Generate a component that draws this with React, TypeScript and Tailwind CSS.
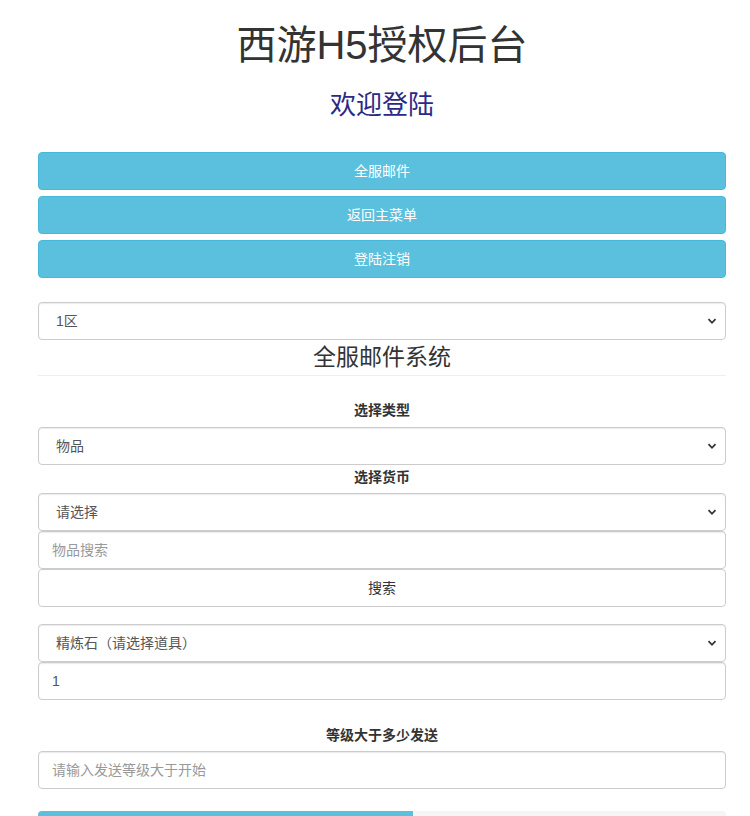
import React from 'react';

const font = { fontFamily: '"Liberation Sans", "Noto Sans CJK SC", sans-serif' };

const Chevron = () => (
  <svg width="10" height="10" viewBox="0 0 10 10" className="text-[#333]">
    <path d="M1.5 3.2 L5 6.8 L8.5 3.2" fill="none" stroke="currentColor" strokeWidth="1.8" />
  </svg>
);

const Select: React.FC<{ value: string }> = ({ value }) => (
  <div className="flex h-[38px] items-center justify-between rounded border border-[#ccc] bg-white pl-[17px] pr-[8px] text-[14px] text-[#555] shadow-[inset_0_1px_1px_rgba(0,0,0,0.08)]">
    <span>{value}</span>
    <Chevron />
  </div>
);

const Input: React.FC<{ value?: string; placeholder?: string }> = ({ value, placeholder }) => (
  <div className="flex h-[38px] items-center rounded border border-[#ccc] bg-white px-[13px] text-[14px] shadow-[inset_0_1px_1px_rgba(0,0,0,0.08)]">
    {value ? <span className="text-[#555]">{value}</span> : <span className="text-[#999]">{placeholder}</span>}
  </div>
);

const Label: React.FC<{ children: React.ReactNode }> = ({ children }) => (
  <div className="text-center text-[14px] font-bold leading-[20px] text-[#333]">{children}</div>
);

const InfoButton: React.FC<{ children: React.ReactNode }> = ({ children }) => (
  <button className="flex h-[38px] w-full items-center justify-center rounded border border-[#46b8da] bg-[#5bc0de] text-[14px] text-white">
    {children}
  </button>
);

export default function App() {
  return (
    <div className="min-h-[816px] overflow-hidden bg-white" style={font}>
      <div className="ml-[38px] w-[688px] pt-[22px]">
        <h1 className="text-center text-[40px] leading-[46px] text-[#333]">西游H5授权后台</h1>
        <h2 className="mt-[21px] text-center text-[26px] leading-[32px] text-[#2a2a86]">欢迎登陆</h2>

        <div className="mt-[31px] flex flex-col gap-[6px]">
          <InfoButton>全服邮件</InfoButton>
          <InfoButton>返回主菜单</InfoButton>
          <InfoButton>登陆注销</InfoButton>
        </div>

        <div className="mt-[24px]">
          <Select value="1区" />
        </div>

        <h3 className="mt-[1px] text-center text-[23px] leading-[32px] text-[#333]">全服邮件系统</h3>
        <hr className="mt-[2px] border-t border-[#eee]" />

        <div className="mt-[24px]">
          <Label>选择类型</Label>
        </div>
        <div className="mt-[7px]">
          <Select value="物品" />
        </div>
        <div className="mt-[2px]">
          <Label>选择货币</Label>
        </div>
        <div className="mt-[6px] flex flex-col gap-0">
          <Select value="请选择" />
          <Input placeholder="物品搜索" />
          <button className="h-[38px] w-full rounded border border-[#ccc] bg-white text-[14px] text-[#333]">搜索</button>
        </div>

        <div className="mt-[17px] flex flex-col">
          <Select value="精炼石（请选择道具）" />
          <Input value="1" />
        </div>

        <div className="mt-[25px]">
          <Label>等级大于多少发送</Label>
        </div>
        <div className="mt-[6px]">
          <Input placeholder="请输入发送等级大于开始" />
        </div>

        <div className="mt-[22px] flex h-[30px] overflow-hidden rounded-t bg-[#f5f5f5]">
          <div className="w-[375px] bg-[#5bc0de]" />
        </div>
      </div>
    </div>
  );
}
